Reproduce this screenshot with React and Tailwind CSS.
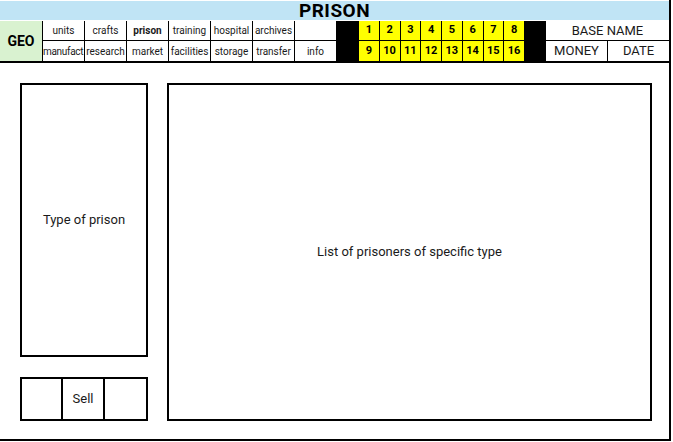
const topNav = ["units", "crafts", "prison", "training", "hospital", "archives", ""];
const bottomNav = ["manufact", "research", "market", "facilities", "storage", "transfer", "info"];
const topNums = [1, 2, 3, 4, 5, 6, 7, 8];
const bottomNums = [9, 10, 11, 12, 13, 14, 15, 16];

function NavCell({ label, bottom }) {
  return (
    <div
      className={
        "h-[20px] border-l border-black flex items-center overflow-hidden whitespace-nowrap text-[10px] text-[#1a1a1a] " +
        (bottom ? "" : "border-b ") +
        (label === "manufact" ? "justify-start tracking-[-0.3px]" : "justify-center") +
        (label === "prison" ? " font-bold" : "")
      }
    >
      {label}
    </div>
  );
}

function NumCell({ n, bottom }) {
  return (
    <div
      className={
        "h-[20px] border-l border-black bg-[#ffff00] flex items-center justify-center text-[11px] font-bold text-black " +
        (bottom ? "" : "border-b")
      }
    >
      {n}
    </div>
  );
}

export default function App() {
  return (
    <div
      className="w-[673px] h-[442px] bg-white"
      style={{ fontFamily: "Roboto, 'Noto Sans', sans-serif" }}
    >
      <div className="w-[671px] h-[441px] border-r-2 border-b-2 border-black flex flex-col">
        {/* Title bar */}
        <div className="pt-[1px]">
          <div className="h-[19px] bg-[#c0e4f5] flex items-center justify-center text-[19px] font-bold leading-none text-black tracking-[0.5px]">
            PRISON
          </div>
        </div>

        {/* Nav rows */}
        <div className="mt-[1px] flex h-[42px] border-b-2 border-black">
          <div className="w-[42px] bg-[#d9f2d0] flex items-center justify-center text-[14px] font-bold text-black">
            GEO
          </div>
          <div className="w-[295px] grid grid-cols-7 border-r border-black">
            {topNav.map((t, i) => (
              <NavCell key={"t" + i} label={t} />
            ))}
            {bottomNav.map((t, i) => (
              <NavCell key={"b" + i} label={t} bottom />
            ))}
          </div>
          <div className="w-[21px] bg-black" />
          <div className="w-[167px] grid grid-cols-8 border-r border-black">
            {topNums.map((n) => (
              <NumCell key={n} n={n} />
            ))}
            {bottomNums.map((n) => (
              <NumCell key={n} n={n} bottom />
            ))}
          </div>
          <div className="w-[21px] bg-black" />
          <div className="flex-1 flex flex-col text-[13px] text-[#1a1a1a]">
            <div className="h-[20px] border-b border-black flex items-center justify-center">
              BASE NAME
            </div>
            <div className="flex-1 flex">
              <div className="w-[62px] border-r border-black flex items-center justify-center">
                MONEY
              </div>
              <div className="flex-1 flex items-center justify-center">DATE</div>
            </div>
          </div>
        </div>

        {/* Body */}
        <div className="flex-1 flex gap-[19px] pl-[20px] pr-[17px] pt-[20px] pb-[18px]">
          <div className="w-[128px] flex flex-col gap-[20px]">
            <div className="h-[274px] border-2 border-black flex items-center justify-center text-[13px] text-[#1a1a1a]">
              Type of prison
            </div>
            <div className="flex-1 border-2 border-black flex">
              <div className="w-[41px] border-r-2 border-black" />
              <div className="w-[42px] border-r-2 border-black flex items-center justify-center text-[13px] text-[#1a1a1a]">
                Sell
              </div>
              <div className="flex-1" />
            </div>
          </div>
          <div className="flex-1 border-2 border-black flex items-center justify-center text-[13px] text-[#1a1a1a]">
            List of prisoners of specific type
          </div>
        </div>
      </div>
    </div>
  );
}
